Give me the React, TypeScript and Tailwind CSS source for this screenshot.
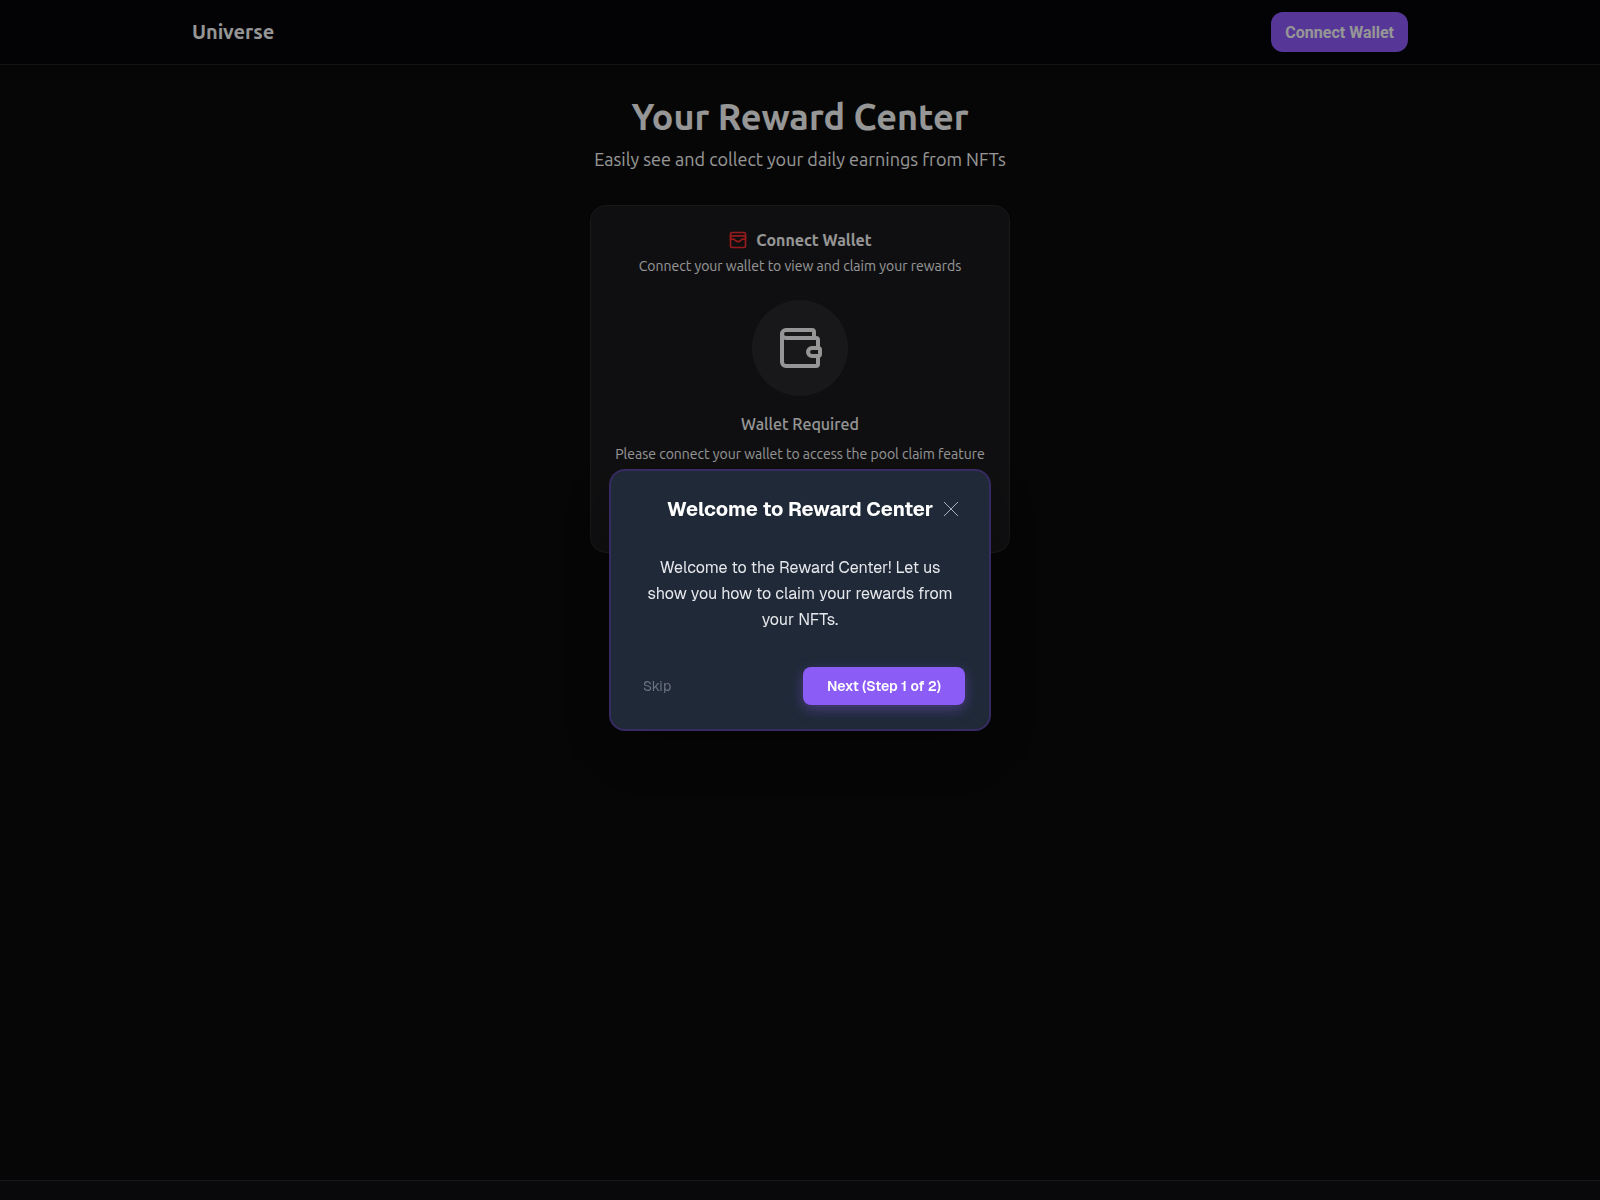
import { Wallet, WalletCards } from "lucide-react";
import { useState } from "react";

function Header() {
  return (
    <header className="border-b border-[#202022] bg-[#05050a]">
      <div className="mx-auto flex h-16 max-w-7xl items-center justify-between px-8">
        <a href="#" className="text-xl font-semibold text-[#fafafa]">
          Universe
        </a>
        <button className="h-10 rounded-xl bg-[#8f5cfc] px-3.5 pt-0.5 font-['Roboto',sans-serif] text-base font-bold text-[#fafafa]">
          Connect Wallet
        </button>
      </div>
    </header>
  );
}

function WalletCard() {
  return (
    <section className="mt-8 w-full max-w-[420px] rounded-2xl border border-[#2a2a2d] bg-[#1a1a1d] px-4 pt-6 pb-22 text-center">
      <h2 className="flex h-5 items-center justify-center gap-2 text-base font-semibold text-[#fafafa]">
        <WalletCards className="size-5 text-[#fb2c30]" />
        Connect Wallet
      </h2>
      <p className="mt-1.5 text-sm text-[#fafafa]">Connect your wallet to view and claim your rewards</p>
      <div className="mx-auto mt-6 flex size-24 items-center justify-center rounded-full bg-[#29292c]">
        <Wallet className="size-12 text-[#fafafa]" />
      </div>
      <h3 className="mt-4 text-base font-medium text-[#fafafa]">Wallet Required</h3>
      <p className="mt-2 text-sm text-[#fafafa]">Please connect your wallet to access the pool claim feature</p>
    </section>
  );
}

function WelcomeDialog({ onClose }: { onClose: () => void }) {
  return (
    <div className="fixed inset-0 flex items-center justify-center bg-black/40 px-4">
      <div
        role="dialog"
        aria-modal="true"
        aria-labelledby="welcome-title"
        className="w-full max-w-[382px] rounded-2xl border-2 border-[#372b62] bg-[#1f2937] px-6 pt-6 pb-6 font-['Geist','Inter',sans-serif] shadow-[0_20px_50px_rgba(0,0,0,0.25)]"
      >
        <div className="grid grid-cols-[28px_1fr_28px] items-center">
          <h2 id="welcome-title" className="col-start-2 text-center text-xl leading-7 font-bold whitespace-nowrap text-white">
            Welcome to Reward Center
          </h2>
          <button onClick={onClose} aria-label="Close" className="flex size-7 items-center justify-center text-[#a8aeb8]">
            <svg viewBox="0 0 14 14" className="size-3.5" fill="none" stroke="currentColor">
              <path d="M0 0 14 14M14 0 0 14" />
            </svg>
          </button>
        </div>
        <p className="mt-8 px-2 text-center text-base leading-[26px] text-[#e5e7eb]">
          Welcome to the Reward Center! Let us show you how to claim your rewards from your NFTs.
        </p>
        <div className="mt-[34px] flex items-center justify-between">
          <button onClick={onClose} className="px-2 text-sm text-[#6b7280]">
            Skip
          </button>
          <button className="h-[38px] rounded-lg bg-[#8b5cf6] px-6 text-sm font-semibold text-white shadow-[0_4px_14px_rgba(139,92,246,0.4)]">
            Next (Step 1 of 2)
          </button>
        </div>
      </div>
    </div>
  );
}

export default function App() {
  const [open, setOpen] = useState(true);

  return (
    <div className="flex min-h-screen flex-col bg-[#0a0a0a] font-['Ubuntu','Noto_Sans',sans-serif]">
      <Header />
      <main className="flex flex-1 flex-col items-center px-4 pt-8">
        <h1 className="text-4xl font-bold text-[#fafafa]">Your Reward Center</h1>
        <p className="mt-2 text-lg text-[#fafafa]">Easily see and collect your daily earnings from NFTs</p>
        <WalletCard />
      </main>
      <footer className="h-5 border-t border-[#2a2a2d] bg-[#101014]" />
      {open && <WelcomeDialog onClose={() => setOpen(false)} />}
    </div>
  );
}
